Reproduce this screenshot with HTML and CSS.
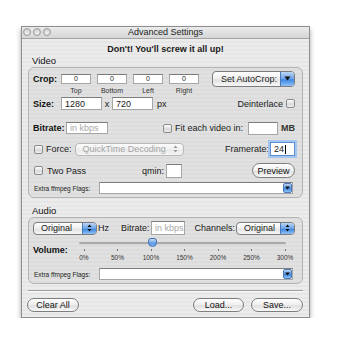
FILE: index.html
```html
<!DOCTYPE html>
<html>
  <head>
    <meta charset="utf-8">
    <title>Advanced Settings</title>
    <link rel="stylesheet" href="styles.css">
  </head>
  <body>
    <div class="window">
      <div class="titlebar">
        <div class="lights">
          <span class="light"></span>
          <span class="light"></span>
          <span class="light"></span>
        </div>
        <div class="title">Advanced Settings</div>
      </div>

      <div class="warning">Don't! You'll screw it all up!</div>

      <div class="section-label">Video</div>
      <div class="group video">
        <div class="row crop-row">
          <span class="label bold crop-label">Crop:</span>
          <span class="field small">0</span>
          <span class="field small">0</span>
          <span class="field small">0</span>
          <span class="field small">0</span>
          <span class="popup autocrop">
            <span class="popup-text">Set AutoCrop:</span>
            <span class="popup-btn"><svg width="7" height="5" viewBox="0 0 7 5"><path d="M0.5 0.5 L6.5 0.5 L3.5 4.5 Z" fill="#111"/></svg></span>
          </span>
        </div>
        <div class="row crop-names">
          <span>Top</span>
          <span>Bottom</span>
          <span>Left</span>
          <span>Right</span>
        </div>

        <div class="row size-row">
          <span class="label bold crop-label">Size:</span>
          <span class="field size">1280</span>
          <span class="times">x</span>
          <span class="field size">720</span>
          <span class="unit">px</span>
          <span class="push">Deinterlace</span>
          <span class="checkbox"></span>
        </div>

        <div class="row bitrate-row">
          <span class="label bold bitrate-label">Bitrate:</span>
          <span class="field bitrate placeholder">in kbps</span>
          <span class="checkbox push"></span>
          <span class="after-box">Fit each video in:</span>
          <span class="field mb"></span>
          <span class="unit-mb">MB</span>
        </div>

        <div class="row force-row">
          <span class="checkbox first"></span>
          <span class="after-box">Force:</span>
          <span class="popup disabled decoding">
            <span class="popup-text">QuickTime Decoding</span>
            <span class="updown grey"><svg width="5" height="8" viewBox="0 0 5 8"><path d="M2.5 0.5 L4.5 3 L0.5 3 Z M2.5 7.5 L4.5 5 L0.5 5 Z" fill="#999"/></svg></span>
          </span>
          <span class="push">Framerate:</span>
          <span class="field framerate">24<span class="caret"></span></span>
        </div>

        <div class="row twopass-row">
          <span class="checkbox first"></span>
          <span class="after-box twopass">Two Pass</span>
          <span class="qmin">qmin:</span>
          <span class="field qmin-field"></span>
          <span class="button push preview">Preview</span>
        </div>

        <div class="row extra-row">
          <span class="tiny extra-label">Extra ffmpeg Flags:</span>
          <span class="combo">
            <span class="combo-btn"><svg width="5" height="4" viewBox="0 0 5 4"><path d="M0 0.5 L5 0.5 L2.5 3.5 Z" fill="#111"/></svg></span>
          </span>
        </div>
      </div>

      <div class="section-label audio-label">Audio</div>
      <div class="group audio">
        <div class="row audio-row">
          <span class="popup original">
            <span class="popup-text">Original</span>
            <span class="popup-btn"><svg width="5" height="8" viewBox="0 0 5 8"><path d="M2.5 0.5 L4.5 3 L0.5 3 Z M2.5 7.5 L4.5 5 L0.5 5 Z" fill="#111"/></svg></span>
          </span>
          <span class="hz">Hz</span>
          <span class="audio-bitrate">Bitrate:</span>
          <span class="field audio-kbps placeholder">in kbps</span>
          <span class="push">Channels:</span>
          <span class="popup channels">
            <span class="popup-text">Original</span>
            <span class="popup-btn"><svg width="5" height="8" viewBox="0 0 5 8"><path d="M2.5 0.5 L4.5 3 L0.5 3 Z M2.5 7.5 L4.5 5 L0.5 5 Z" fill="#111"/></svg></span>
          </span>
        </div>

        <div class="row volume-row">
          <span class="label bold volume-label">Volume:</span>
          <div class="slider">
            <div class="track"></div>
            <span class="knob"></span>
            <div class="ticks">
              <span class="tick">0%</span>
              <span class="tick">50%</span>
              <span class="tick">100%</span>
              <span class="tick">150%</span>
              <span class="tick">200%</span>
              <span class="tick">250%</span>
              <span class="tick">300%</span>
            </div>
          </div>
        </div>

        <div class="row extra-row audio-extra">
          <span class="tiny extra-label">Extra ffmpeg Flags:</span>
          <span class="combo">
            <span class="combo-btn"><svg width="5" height="4" viewBox="0 0 5 4"><path d="M0 0.5 L5 0.5 L2.5 3.5 Z" fill="#111"/></svg></span>
          </span>
        </div>
      </div>

      <div class="separator"></div>

      <div class="buttons">
        <span class="button clear">Clear All</span>
        <span class="button load">Load...</span>
        <span class="button save">Save...</span>
      </div>
    </div>
  </body>
</html>
```

FILE: styles.css
```css
* {
  box-sizing: border-box;
}

body {
  margin: 0;
  padding: 0;
  background-color: #fff;
  font-family: "Liberation Sans", Arial, sans-serif;
  font-size: 9px;
  color: #1a1a1a;
}

.window {
  width: 289px;
  height: 292px;
  margin: 26px 0 0 21px;
  border: 1px solid #8e8e8e;
  background: repeating-linear-gradient(180deg, #ececec 0, #ececec 2px, #e6e6e6 2px, #e6e6e6 4px);
  box-shadow: 0 3px 5px rgba(0, 0, 0, 0.35);
}

/* title bar */
.titlebar {
  position: relative;
  height: 12px;
  border-bottom: 1px solid #a3a3a3;
  background: linear-gradient(#ebebeb, #d6d6d6);
}

.lights {
  display: flex;
  gap: 2px;
  padding: 1px 0 0 1px;
}

.light {
  width: 8px;
  height: 8px;
  border-radius: 50%;
  border: 1px solid #9d9d9d;
  background: radial-gradient(circle at 50% 70%, #f2f2f2, #c4c4c4);
}

.title {
  position: absolute;
  left: 0;
  right: 0;
  top: 0;
  line-height: 11px;
  text-align: center;
  font-size: 9px;
  color: #222;
}

.warning {
  margin-top: 4px;
  line-height: 12px;
  text-align: center;
  font-weight: bold;
}

.section-label {
  padding-left: 10px;
  line-height: 11px;
  font-size: 9.5px;
  color: #111;
}

.audio-label {
  margin-top: 7px;
}

/* group boxes */
.group {
  margin: 1px 6px 0 6px;
  border: 1px solid #b3b3b3;
  border-radius: 6px;
  background: rgba(0, 0, 0, 0.045);
  padding: 2px 7px 3px 4px;
}

.video {
  height: 131px;
}

.audio {
  height: 67px;
  padding-top: 3px;
}

.row {
  display: flex;
  align-items: center;
  white-space: nowrap;
}

.push {
  margin-left: auto;
}

.bold {
  font-weight: bold;
}

.label {
  color: #111;
}

.crop-label {
  width: 28px;
}

/* text fields */
.field {
  display: flex;
  align-items: center;
  background: #fff;
  border: 1px solid #a6a6a6;
  border-top-color: #7d7d7d;
  padding-left: 3px;
  height: 13px;
}

.field.small {
  width: 30px;
  height: 10px;
  margin-right: 6px;
  justify-content: center;
  padding-left: 0;
  font-size: 7px;
}

.placeholder {
  color: #a8a8a8;
}

.crop-row {
  height: 17px;
}

.crop-names {
  height: 7px;
  padding-left: 28px;
  font-size: 7px;
  color: #333;
}

.crop-names span {
  width: 30px;
  margin-right: 6px;
  text-align: center;
}

.size-row {
  height: 13px;
  margin-top: 3px;
}

.field.size {
  width: 41px;
}

.times {
  width: 10px;
  text-align: center;
}

.unit {
  margin-left: 4px;
}

.checkbox {
  width: 9px;
  height: 9px;
  border: 1px solid #8b8b8b;
  border-radius: 2px;
  background: linear-gradient(#fdfdfd, #d9d9d9 60%, #efefef);
}

.size-row .checkbox {
  margin-left: 3px;
}

.bitrate-row {
  height: 14px;
  margin-top: 11px;
}

.bitrate-label {
  width: 33px;
}

.field.bitrate {
  width: 42px;
  height: 12px;
}

.after-box {
  margin-left: 3px;
}

.field.mb {
  width: 30px;
  height: 13px;
  margin-left: 5px;
}

.unit-mb {
  margin-left: 3px;
  font-weight: bold;
  color: #333;
}

.force-row {
  height: 14px;
  margin-top: 7px;
}

.checkbox.first {
  margin-left: 1px;
}

/* popups */
.popup {
  display: flex;
  align-items: center;
  height: 13px;
  border: 1px solid #7c7c7c;
  border-radius: 4px;
  background: linear-gradient(#ffffff, #eeeeee 50%, #e2e2e2 55%, #f7f7f7);
  overflow: hidden;
}

.popup-text {
  flex: 1;
  padding-left: 7px;
}

.popup-btn {
  display: flex;
  align-items: center;
  justify-content: center;
  width: 14px;
  height: 100%;
  border-left: 1px solid #4a79b8;
  background: linear-gradient(#bcd6f4, #6aa2e6 50%, #3d86e0 55%, #8fc2fa);
}

.autocrop {
  width: 83px;
  height: 16px;
  margin-left: auto;
}

.autocrop .popup-text {
  padding-left: 8px;
}

.popup.disabled {
  border-color: #b9b9b9;
  color: #a5a5a5;
  background: linear-gradient(#fbfbfb, #efefef 50%, #e9e9e9 55%, #f6f6f6);
}

.decoding {
  width: 109px;
  margin-left: 3px;
}

.updown {
  width: 14px;
  display: flex;
  justify-content: center;
}

.field.framerate {
  width: 25px;
  height: 14px;
  margin-left: 1px;
  border: 1px solid #5d8fd0;
  box-shadow: 0 0 0 2px #a5c6ee;
}

.caret {
  width: 1px;
  height: 9px;
  margin-left: 1px;
  background: #000;
}

.twopass-row {
  height: 15px;
  margin-top: 7px;
}

.twopass {
  width: 95px;
  margin-left: 4px;
}

.field.qmin-field {
  width: 16px;
  height: 14px;
  margin-left: 2px;
}

/* buttons */
.button {
  display: flex;
  align-items: center;
  justify-content: center;
  height: 15px;
  border: 1px solid #7e7e7e;
  border-radius: 8px;
  background: linear-gradient(#ffffff, #eeeeee 50%, #e0e0e0 55%, #f8f8f8);
  color: #111;
}

.preview {
  width: 43px;
}

/* extra flags combo */
.extra-row {
  height: 12px;
  margin-top: 4px;
}

.tiny {
  font-size: 6.5px;
  color: #222;
}

.extra-label {
  width: 65px;
  margin-left: 1px;
}

.combo {
  display: flex;
  justify-content: flex-end;
  align-items: center;
  width: 194px;
  height: 12px;
  background: #fff;
  border: 1px solid #a6a6a6;
  border-top-color: #7d7d7d;
}

.combo-btn {
  display: flex;
  align-items: center;
  justify-content: center;
  width: 9px;
  height: 10px;
  border-radius: 2px;
  border: 1px solid #4a79b8;
  background: linear-gradient(#bcd6f4, #5f9ae4 50%, #3d86e0 55%, #8fc2fa);
}

/* audio */
.audio-row {
  height: 14px;
}

.original {
  width: 64px;
  height: 13px;
}

.hz {
  width: 24px;
  padding-left: 1px;
}

.audio-bitrate {
  width: 30px;
}

.field.audio-kbps {
  width: 34px;
  height: 14px;
}

.channels {
  width: 59px;
  margin-left: 1px;
}

.volume-row {
  align-items: flex-start;
  height: 27px;
  margin-top: 2px;
}

.volume-label {
  width: 42px;
  padding-top: 8px;
}

.slider {
  position: relative;
  width: 227px;
}

.track {
  height: 3px;
  margin: 5px 9px 0 5px;
  border-radius: 2px;
  background: #a9a9a9;
  border-bottom: 1px solid #d8d8d8;
}

.knob {
  position: absolute;
  left: 74px;
  top: 1px;
  width: 9px;
  height: 9px;
  border: 1px solid #3c6fb6;
  border-radius: 3px 3px 50% 50%;
  background: linear-gradient(#cfe2f8, #5e9be6 60%, #7fb4f4);
}

.ticks {
  display: flex;
  justify-content: space-between;
  margin-top: 4px;
}

.tick {
  position: relative;
  width: 20px;
  padding-top: 5px;
  text-align: center;
  font-size: 6.5px;
  color: #333;
}

.tick::before {
  content: "";
  position: absolute;
  left: 10px;
  top: 0;
  width: 1px;
  height: 2px;
  background: #777;
}

/* bottom */
.separator {
  margin: 6px 6px 0 6px;
  height: 2px;
  border-top: 1px solid #9e9e9e;
  border-bottom: 1px solid #fafafa;
}

.buttons {
  display: flex;
  margin-top: 6px;
  padding: 0 6px 0 5px;
}

.clear {
  width: 52px;
  height: 14px;
}

.load {
  width: 51px;
  height: 14px;
  margin-left: auto;
}

.save {
  width: 52px;
  height: 14px;
  margin-left: 7px;
}
```
